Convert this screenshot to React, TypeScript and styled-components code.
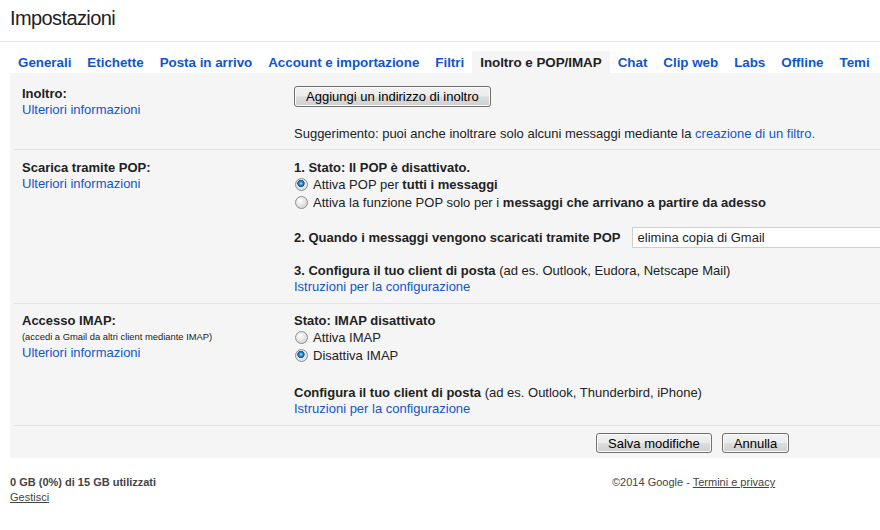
import React from "react";
import styled, { createGlobalStyle } from "styled-components";

const GlobalStyle = createGlobalStyle`
  html, body {
    margin: 0;
    padding: 0;
    background: #fff;
    overflow: hidden;
  }
  body {
    font-family: "Liberation Sans", Arial, sans-serif;
    font-size: 13px;
    color: #222;
  }
`;

const TABS = [
  "Generali",
  "Etichette",
  "Posta in arrivo",
  "Account e importazione",
  "Filtri",
  "Inoltro e POP/IMAP",
  "Chat",
  "Clip web",
  "Labs",
  "Offline",
  "Temi",
];
const ACTIVE_TAB = "Inoltro e POP/IMAP";

const App: React.FC = () => {
  return (
    <Page>
      <GlobalStyle />
      <Header>
        <Title>Impostazioni</Title>
      </Header>
      <Main>
        <TabBar>
          {TABS.map((t) => (
            <Tab key={t} $active={t === ACTIVE_TAB}>
              {t}
            </Tab>
          ))}
        </TabBar>
        <Panel>
          <Section $pt={11} $pb={7}>
            <LeftCol $offset={2}>
              <Label>Inoltro:</Label>
              <Link>Ulteriori informazioni</Link>
            </LeftCol>
            <RightCol>
              <div>
                <Button $mt={2}>Aggiungi un indirizzo di inoltro</Button>
              </div>
              <Line $mt={19}>
                Suggerimento: puoi anche inoltrare solo alcuni messaggi mediante la{" "}
                <Link>creazione di un filtro.</Link>
              </Line>
            </RightCol>
          </Section>

          <Section $pt={10} $pb={8}>
            <LeftCol>
              <Label>Scarica tramite POP:</Label>
              <Link>Ulteriori informazioni</Link>
            </LeftCol>
            <RightCol>
              <Heading>1. Stato: Il POP è disattivato.</Heading>
              <RadioRow>
                <Radio type="radio" name="pop" defaultChecked />
                <span>
                  Attiva POP per <b>tutti i messaggi</b>
                </span>
              </RadioRow>
              <RadioRow>
                <Radio type="radio" name="pop" />
                <span>
                  Attiva la funzione POP solo per i{" "}
                  <b>messaggi che arrivano a partire da adesso</b>
                </span>
              </RadioRow>
              <SelectRow $mt={15}>
                <b>2. Quando i messaggi vengono scaricati tramite POP</b>
                <SelectBox defaultValue="elimina">
                  <option value="elimina">elimina copia di Gmail</option>
                </SelectBox>
              </SelectRow>
              <Line $mt={15}>
                <b>3. Configura il tuo client di posta</b> (ad es. Outlook, Eudora,
                Netscape Mail)
              </Line>
              <Line>
                <Link>Istruzioni per la configurazione</Link>
              </Line>
            </RightCol>
          </Section>

          <Section $pt={9} $pb={8}>
            <LeftCol>
              <Label>Accesso IMAP:</Label>
              <Note>(accedi a Gmail da altri client mediante IMAP)</Note>
              <Link>Ulteriori informazioni</Link>
            </LeftCol>
            <RightCol>
              <Heading>Stato: IMAP disattivato</Heading>
              <RadioRow>
                <Radio type="radio" name="imap" />
                <span>Attiva IMAP</span>
              </RadioRow>
              <RadioRow>
                <Radio type="radio" name="imap" defaultChecked />
                <span>Disattiva IMAP</span>
              </RadioRow>
              <Line $mt={21}>
                <b>Configura il tuo client di posta</b> (ad es. Outlook, Thunderbird,
                iPhone)
              </Line>
              <Line>
                <Link>Istruzioni per la configurazione</Link>
              </Line>
            </RightCol>
          </Section>

          <ButtonBar>
            <Button>Salva modifiche</Button>
            <Button>Annulla</Button>
          </ButtonBar>
        </Panel>
      </Main>
      <Footer>
        <div>
          <Usage>0 GB (0%) di 15 GB utilizzati</Usage>
          <FooterLink>Gestisci</FooterLink>
        </div>
        <FooterText>
          ©2014 Google - <FooterLink>Termini e privacy</FooterLink>
        </FooterText>
      </Footer>
    </Page>
  );
};

export default App;

const Page = styled.div`
  width: 880px;
  height: 530px;
  overflow: hidden;
`;

const Header = styled.div`
  height: 35px;
  padding: 6px 0 0 10px;
  border-bottom: 1px solid #e5e5e5;
`;

const Title = styled.h1`
  margin: 0;
  font-size: 20px;
  line-height: 24px;
  font-weight: normal;
  letter-spacing: -0.6px;
  color: #222;
`;

const Main = styled.div`
  margin: 9px 0 0 10px;
`;

const TabBar = styled.div`
  display: flex;
  white-space: nowrap;
`;

const Tab = styled.div<{ $active?: boolean }>`
  padding: 4px 8px 2px;
  line-height: 16px;
  font-size: 13.4px;
  letter-spacing: -0.03px;
  font-weight: bold;
  color: ${(p) => (p.$active ? "#222" : "#15c")};
  background: ${(p) => (p.$active ? "#f5f5f5" : "transparent")};
  cursor: pointer;
`;

const Panel = styled.div`
  background: #f5f5f5;
  width: 900px;
`;

const Section = styled.div<{ $pt: number; $pb: number }>`
  display: grid;
  grid-template-columns: 272px 1fr;
  margin-left: 4px;
  padding: ${(p) => p.$pt}px 0 ${(p) => p.$pb}px 8px;
  border-bottom: 1px solid #e3e3e3;
`;

const LeftCol = styled.div<{ $offset?: number }>`
  display: flex;
  flex-direction: column;
  align-items: flex-start;
  padding-top: ${(p) => p.$offset ?? 0}px;
`;

const RightCol = styled.div`
  display: flex;
  flex-direction: column;
  align-items: stretch;
`;

const Label = styled.div`
  font-weight: bold;
  line-height: 16px;
  color: #222;
`;

const Note = styled.div`
  font-size: 9.4px;
  line-height: 16px;
  color: #222;
`;

const Link = styled.span`
  color: #15c;
  line-height: 16px;
  cursor: pointer;
`;

const Line = styled.div<{ $mt?: number }>`
  margin-top: ${(p) => p.$mt ?? 0}px;
  line-height: 16px;
  white-space: nowrap;
`;

const Heading = styled.div`
  font-weight: bold;
  line-height: 15px;
`;

const RadioRow = styled.label`
  display: flex;
  align-items: center;
  height: 18px;
  white-space: nowrap;
`;

const Radio = styled.input`
  appearance: none;
  -webkit-appearance: none;
  width: 13px;
  height: 13px;
  margin: 0 5px 0 1px;
  box-sizing: border-box;
  border: 1px solid #8d8d8d;
  border-radius: 50%;
  background: radial-gradient(circle at 40% 35%, #ffffff 0, #e6e6e6 45%, #c9c9c9 100%);
  &:checked {
    background: radial-gradient(circle at 45% 40%, #9fdcff 0, #2f8ad0 1.8px, #1a4f7e 3.4px, #e8e8e8 3.9px, #d6d6d6 100%);
  }
`;

const SelectRow = styled.div<{ $mt?: number }>`
  margin-top: ${(p) => p.$mt ?? 0}px;
  display: flex;
  align-items: center;
  height: 22px;
  white-space: nowrap;
`;

const SelectBox = styled.select`
  appearance: none;
  -webkit-appearance: none;
  margin-left: 11px;
  width: 320px;
  height: 21px;
  padding: 0 5px;
  border: 1px solid #cfcfcf;
  border-radius: 0;
  background: #fff;
  font-family: "Liberation Sans", Arial, sans-serif;
  font-size: 13px;
  color: #222;
`;

const Button = styled.button<{ $mt?: number }>`
  margin-top: ${(p) => p.$mt ?? 0}px;
  height: 21px;
  padding: 0 11px;
  border: 1px solid #707070;
  border-radius: 3px;
  background: linear-gradient(to bottom, #f2f2f2 0%, #ebebeb 48%, #dddddd 52%, #cfcfcf 100%);
  box-shadow: inset 0 0 0 1px #fafafa;
  font-family: "Liberation Sans", Arial, sans-serif;
  font-size: 13px;
  color: #000;
  cursor: pointer;
`;

const ButtonBar = styled.div`
  display: flex;
  gap: 10px;
  padding: 7px 0 5px 586px;
  & > button {
    height: 20px;
  }
`;

const Footer = styled.div`
  display: grid;
  grid-template-columns: 602px 1fr;
  padding: 17px 0 0 10px;
  font-size: 11px;
  line-height: 15px;
  color: #444;
`;

const Usage = styled.div`
  font-weight: bold;
  color: #444;
`;

const FooterText = styled.div`
  color: #444;
`;

const FooterLink = styled.span`
  color: #444;
  text-decoration: underline;
  cursor: pointer;
`;
